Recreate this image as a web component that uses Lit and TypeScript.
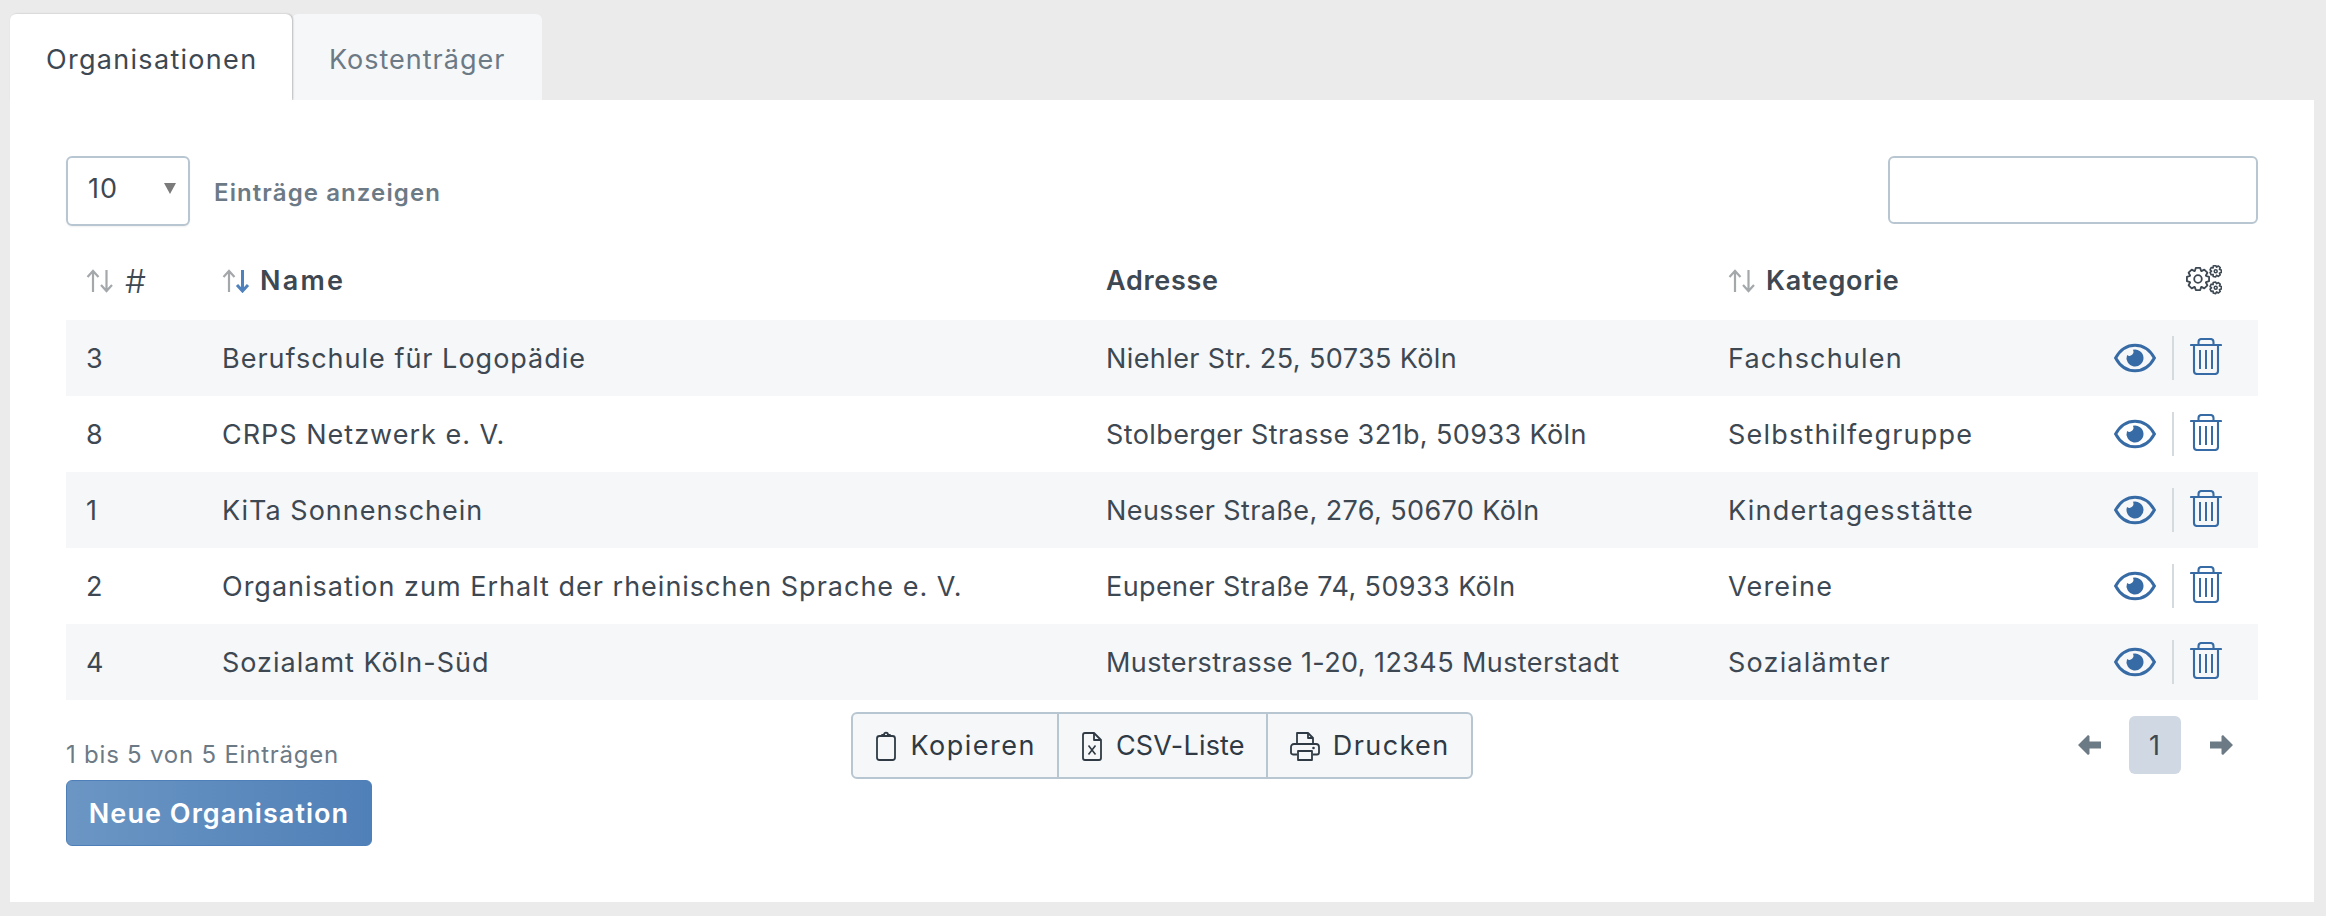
import { LitElement, html, css, svg } from "lit";
import { customElement } from "lit/decorators.js";

const rows = [
  ["3", "Berufschule für Logopädie", "Niehler Str. 25, 50735 Köln", "Fachschulen"],
  ["8", "CRPS Netzwerk e. V.", "Stolberger Strasse 321b, 50933 Köln", "Selbsthilfegruppe"],
  ["1", "KiTa Sonnenschein", "Neusser Straße, 276, 50670 Köln", "Kindertagesstätte"],
  ["2", "Organisation zum Erhalt der rheinischen Sprache e. V.", "Eupener Straße 74, 50933 Köln", "Vereine"],
  ["4", "Sozialamt Köln-Süd", "Musterstrasse 1-20, 12345 Musterstadt", "Sozialämter"],
];

function gearPath(cx: number, cy: number, ro: number, ri: number, teeth: number) {
  const pts: string[] = [];
  for (let i = 0; i < teeth; i++) {
    const a = (i / teeth) * Math.PI * 2;
    const w = Math.PI / teeth;
    const add = (an: number, r: number) =>
      pts.push(`${(cx + r * Math.cos(an)).toFixed(2)} ${(cy + r * Math.sin(an)).toFixed(2)}`);
    add(a - w * 0.95, ri);
    add(a - w * 0.5, ro);
    add(a + w * 0.5, ro);
    add(a + w * 0.95, ri);
  }
  return "M" + pts.join("L") + "Z";
}

const sortIcon = (active = false) => html`<svg class="sort" viewBox="0 0 28 24" width="28" height="24" fill="none" stroke-width="2.2">
  <path d="M7 23V2M1.5 8 7 2l5.500 6" stroke="#a4a8ab"/>
  <path d="M20.500 1v21M15 16l5.500 6 5.500-6" stroke=${active ? "#4f81bd" : "#a4a8ab"} stroke-width=${active ? 3 : 2.2}/>
</svg>`;

const gears = html`<svg viewBox="0 0 36 30" width="36" height="30" fill="none" stroke="#3d4852" stroke-width="1.8" stroke-linejoin="round">
  <path d=${gearPath(12, 14, 11.3, 8.6, 8)}/><circle cx="12" cy="14" r="3.8"/>
  <path d=${gearPath(29.7, 6.2, 5.8, 4.2, 7)} stroke-width="1.6"/><circle cx="29.7" cy="6.2" r="1.5" stroke-width="1.5"/>
  <path d=${gearPath(29.7, 22.8, 5.8, 4.2, 7)} stroke-width="1.6"/><circle cx="29.7" cy="22.800" r="1.5" stroke-width="1.5"/>
</svg>`;

const eye = html`<svg viewBox="0 0 42 30" width="42" height="30" fill="none">
  <path d="M1.600 15C6 7 13 2.200 21 2.200S36 7 40.400 15C36 23 29 27.800 21 27.800S6 23 1.600 15Z" stroke="#376ba5" stroke-width="3"/>
  <path fill="#376ba5" d="M18.870 6.780A8.500 8.500 0 1 1 13.050 12.020A4 4 0 0 0 18.870 6.780Z"/>
</svg>`;

const trash = html`<svg class="bin" viewBox="0 0 32 37" width="32" height="37" fill="none" stroke="#376ba5" stroke-width="2.100" stroke-linecap="round">
  <path d="M1 7h30"/><path d="M8.500 6.500V4c0-1.700 1.300-3 3-3h9c1.700 0 3 1.300 3 3v2.500"/>
  <path d="M4 7v26c0 1.700 1.300 3 3 3h18c1.700 0 3-1.300 3-3V7"/>
  <path d="M10 12v19M16 12v19M22 12v19" stroke-width="2" stroke-linecap="butt"/>
</svg>`;

const clip = html`<svg viewBox="0 0 22 30" width="22" height="30" fill="none" stroke="#2f3a44" stroke-width="1.800" stroke-linejoin="round">
  <rect x="2" y="5" width="18" height="24" rx="2.500"/><path d="M7 5V4h2C9 .8 13 .8 13 4h2v1"/>
</svg>`;
const csv = html`<svg viewBox="0 0 22 30" width="22" height="30" fill="none" stroke="#2f3a44" stroke-width="1.800" stroke-linejoin="round">
  <path d="M4 2h9l7 7v18c0 1.200-.8 2-2 2H4c-1.200 0-2-.8-2-2V4c0-1.200.8-2 2-2Z"/><path d="M13 2v7h7"/>
  <path d="M7.500 14.500l7 9M14.500 14.500l-7 9" stroke-width="1.600"/>
</svg>`;
const printer = html`<svg viewBox="0 0 30 30" width="30" height="30" fill="none" stroke="#2f3a44" stroke-width="1.800" stroke-linejoin="round">
  <path d="M7 13V2h11l5 5v6"/><path d="M18 2v5h5"/>
  <path d="M7 23.500H3c-1.200 0-2-.8-2-2V16c0-1.700 1.300-3 3-3h22c1.700 0 3 1.300 3 3v5.500c0 1.200-.8 2-2 2h-4"/>
  <path d="M8 20h14v9H8z"/><circle cx="23.500" cy="17" r="1.300" fill="#2f3a44" stroke="none"/>
</svg>`;

const arrow = (dir: "l" | "r") => svg`<svg class=${dir === "r" ? "flip" : ""} viewBox="0 0 23 20" width="23" height="20" fill="#6c7a86">
  <path d="M0 10 10 0l1.500 1v5.500H23v7H11.500V19L10 20Z"/>
</svg>`;

@customElement("app-root")
export class AppRoot extends LitElement {
  static styles = css`
    :host {
      display: block;
      height: 916px;
      overflow: hidden;
      background: #ebebeb;
      font-family: Inter, "Liberation Sans", sans-serif;
      font-size: 27px;
      font-weight: 380;
      letter-spacing: 0.98px;
      color: #3d4852;
    }
    .wrap { padding: 14px 12px 0 10px; }
    .tabs { display: flex; height: 86px; }
    .tab {
      display: flex;
      align-items: center;
      border-radius: 6px 6px 0 0;
      padding-top: 4px;
      box-sizing: border-box;
    }
    .tab.active { width: 282px; background: #fff; padding-left: 36px; letter-spacing: 1.3px; box-shadow: 1px 0 2px rgba(0,0,0,.25); position: relative; z-index: 1; }
    .tab.other { width: 250px; background: #f5f7f9; color: #6c7a86; padding-left: 37px; letter-spacing: 1px; }
    .card {
      background: #fff;
      height: 802px;
      box-sizing: border-box;
      padding: 56px 56px 0;
      position: relative;
      z-index: 2;
    }
    .top { display: flex; justify-content: space-between; height: 88px; }
    .len { display: flex; gap: 24px; align-items: flex-start; }
    .select {
      box-sizing: border-box;
      width: 124px;
      height: 70px;
      border: 2px solid #b8c6d2;
      border-radius: 6px;
      display: flex;
      align-items: center;
      justify-content: space-between;
      padding: 0 12px 6px 20px;
      box-shadow: 0 1px 2px rgba(0,0,0,.06);
    }
    .caret { width: 0; height: 0; border: 6px solid transparent; border-top: 11px solid #7b7b7b; border-bottom: 0; }
    .len-label { color: #6c7a86; font-weight: 600; font-size: 24px; letter-spacing: 1.1px; line-height: 74px; }
    .search { width: 370px; height: 68px; box-sizing: border-box; border: 2px solid #b8c6d2; border-radius: 6px; }
    .row {
      display: grid;
      grid-template-columns: 136px 884px 622px 1fr;
      height: 76px;
      align-items: center;
    }
    .row.head { font-weight: 600; letter-spacing: .7px; padding-bottom: 3px; box-sizing: border-box; }
    .row.odd { background: #f5f7f9; }
    .cell { padding-left: 20px; min-width: 0; white-space: nowrap; display: flex; align-items: center; }
    .cell.c-name { letter-spacing: 1px; }
    .cell.c-addr { letter-spacing: .4px; }
    .c-cat { letter-spacing: 1.2px; }
    .head-label { display: flex; align-items: center; gap: 10px; }
    .name { letter-spacing: 2.2px; }
    .hash { font-weight: 300; font-size: 33px; margin-left: 1px; letter-spacing: 0; }
    .sort { flex: none; }
    .cat { display: flex; align-items: center; justify-content: space-between; padding-right: 36px; }
    .actions { display: flex; align-items: center; }
    .sep { width: 2px; height: 44px; background: #d5dadf; margin: 0 16px; }
    .bin { margin-top: -3px; }
    .gears { display: flex; margin-top: -1px; }
    .info { color: #6c7a86; font-size: 24px; letter-spacing: .78px; padding-top: 42px; height: 38px; line-height: 26px; }
    .new {
      display: inline-flex;
      align-items: center;
      justify-content: center;
      box-sizing: border-box;
      width: 306px;
      height: 66px;
      color: #fff;
      font-weight: 600;
      letter-spacing: 1.05px;
      background: linear-gradient(90deg, #6b96c4, #5080b8);
      border: 1px solid #4f7fb8;
      border-radius: 6px;
    }
    .footer { display: grid; grid-template-columns: 1fr auto 1fr; align-items: start; }
    .group {
      display: flex;
      height: 67px;
      box-sizing: border-box;
      margin-top: 12px;
      border: 2px solid #b8c6d2;
      border-radius: 6px;
      background: #f5f7f9;
      color: #2f3a44;
      letter-spacing: 1.5px;
    }
    .btn { display: flex; align-items: center; gap: 13px; padding: 0 21px 0 22px; border-left: 2px solid #b8c6d2; }
    .btn:first-child { border-left: 0; }
    .btn.tight { letter-spacing: .2px; }
    .btn.wide { letter-spacing: 1.4px; }
    .pager { display: flex; justify-content: flex-end; align-items: center; gap: 28px; margin-top: 16px; padding-right: 25px; height: 58px; }
    .page { width: 52px; height: 58px; background: #d0d9e3; border-radius: 6px; display: flex; align-items: center; justify-content: center; }
    .flip { transform: scaleX(-1); margin-left: 1px; }
  `;

  render() {
    return html`<div class="wrap">
      <div class="tabs">
        <div class="tab active">Organisationen</div>
        <div class="tab other">Kostenträger</div>
      </div>
      <div class="card">
        <div class="top">
          <div class="len">
            <div class="select"><span>10</span><span class="caret"></span></div>
            <div class="len-label">Einträge anzeigen</div>
          </div>
          <div class="search"></div>
        </div>
        <div class="row head">
          <div class="cell head-label">${sortIcon()}<span class="hash">#</span></div>
          <div class="cell head-label">${sortIcon(true)}<span class="name">Name</span></div>
          <div class="cell">Adresse</div>
          <div class="cell cat"><span class="head-label">${sortIcon()}<span>Kategorie</span></span><span class="gears">${gears}</span></div>
        </div>
        ${rows.map(
          (r, i) => html`<div class="row ${i % 2 === 0 ? "odd" : ""}">
            <div class="cell">${r[0]}</div>
            <div class="cell c-name">${r[1]}</div>
            <div class="cell c-addr">${r[2]}</div>
            <div class="cell cat"><span class="c-cat">${r[3]}</span><span class="actions">${eye}<span class="sep"></span>${trash}</span></div>
          </div>`
        )}
        <div class="footer">
          <div>
            <div class="info">1 bis 5 von 5 Einträgen</div>
            <div class="new">Neue Organisation</div>
          </div>
          <div class="group">
            <div class="btn">${clip}<span>Kopieren</span></div>
            <div class="btn tight">${csv}<span>CSV-Liste</span></div>
            <div class="btn wide">${printer}<span>Drucken</span></div>
          </div>
          <div class="pager">${arrow("l")}<div class="page">1</div>${arrow("r")}</div>
        </div>
      </div>
    </div>`;
  }
}
